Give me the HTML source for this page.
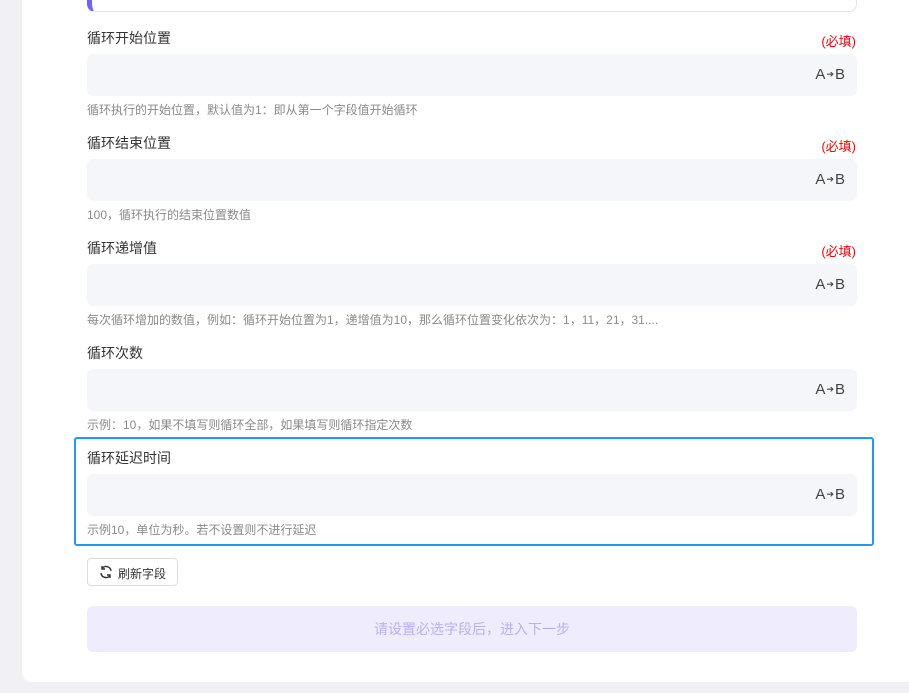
<!DOCTYPE html>
<html><head><meta charset="utf-8"><style>
*{margin:0;padding:0;box-sizing:border-box}
body{width:909px;height:693px;overflow:hidden;background:#f0f0f5;font-family:"Liberation Sans","Noto Sans CJK SC",sans-serif;position:relative}
.card{position:absolute;left:22px;top:-20px;width:900px;height:702px;background:#fff;border-radius:10px}
.topbox{position:absolute;left:87px;top:-10px;width:770px;height:22px;border:1px solid #e2e2e8;border-left:5px solid #6c63ff;border-radius:8px;background:#fff}
.lab{position:absolute;left:87px;font-size:14px;color:#333}
.req{position:absolute;right:53px;font-size:13px;color:#f00}
.inp{position:absolute;left:87px;width:770px;height:42px;background:#f5f6fa;border-radius:6px}
.inp span{position:absolute;right:12px;top:12px;font-size:15px;color:#444}
.inp span i{font-style:normal;font-size:9px;vertical-align:2px;margin:0 1px}
.help{position:absolute;left:87px;font-size:12px;color:#8a8a8a}
.sel{position:absolute;left:74px;top:437px;width:800px;height:109px;border:2px solid #1e9af5;border-radius:3px}
.btn{position:absolute;left:87px;top:558px;width:91px;height:28px;border:1px solid #ddd;border-radius:4px;font-size:12px;color:#333;padding:6px 0 0 30px}
.next{position:absolute;left:87px;top:606px;width:770px;height:46px;background:#efedfd;border-radius:6px;text-align:center;line-height:46px;font-size:14px;color:#b8b0f5}
</style></head><body>
<div class="card"></div>
<div class="topbox"></div>

<div class="lab" style="top:28px">循环开始位置</div><div class="req" style="top:31px">(必填)</div>
<div class="inp" style="top:54px"><span>A<i>➔</i>B</span></div>
<div class="help" style="top:101px">循环执行的开始位置，默认值为1：即从第一个字段值开始循环</div>

<div class="lab" style="top:133px">循环结束位置</div><div class="req" style="top:136px">(必填)</div>
<div class="inp" style="top:159px"><span>A<i>➔</i>B</span></div>
<div class="help" style="top:206px">100，循环执行的结束位置数值</div>

<div class="lab" style="top:238px">循环递增值</div><div class="req" style="top:241px">(必填)</div>
<div class="inp" style="top:264px"><span>A<i>➔</i>B</span></div>
<div class="help" style="top:311px">每次循环增加的数值，例如：循环开始位置为1，递增值为10，那么循环位置变化依次为：1，11，21，31....</div>

<div class="lab" style="top:343px">循环次数</div>
<div class="inp" style="top:369px"><span>A<i>➔</i>B</span></div>
<div class="help" style="top:416px">示例：10，如果不填写则循环全部，如果填写则循环指定次数</div>

<div class="sel"></div>
<div class="lab" style="top:448px">循环延迟时间</div>
<div class="inp" style="top:474px"><span>A<i>➔</i>B</span></div>
<div class="help" style="top:521px">示例10，单位为秒。若不设置则不进行延迟</div>

<div class="btn"><svg style="position:absolute;left:11px;top:6px" width="14" height="14" viewBox="0 0 14 14" fill="none" stroke="#333" stroke-width="1.4"><path d="M12 6A5 5 0 0 0 3 3.5"/><path d="M2 8a5 5 0 0 0 9 2.5"/><path d="M3 1v3h3"/><path d="M11 13v-3H8"/></svg>刷新字段</div>
<div class="next">请设置必选字段后，进入下一步</div>
</body></html>
